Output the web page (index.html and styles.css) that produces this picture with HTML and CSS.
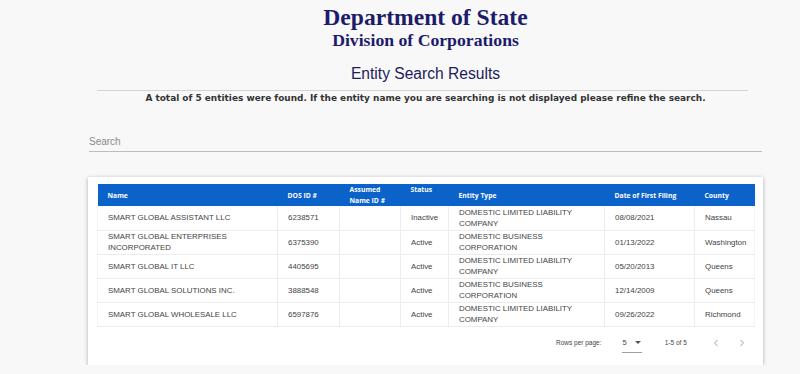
FILE: index.html
```html
<!DOCTYPE html>
<html lang="en">
<head>
<meta charset="utf-8">
<title>Entity Search Results</title>
<link rel="stylesheet" href="styles.css">
</head>
<body>
<div class="page">
  <header class="masthead">
    <div class="dept">Department of State</div>
    <div class="division">Division of Corporations</div>
  </header>

  <h1 class="title">Entity Search Results</h1>
  <hr class="rule">
  <p class="summary">A total of 5 entities were found. If the entity name you are searching is not displayed please refine the search.</p>

  <div class="search">
    <span class="search-label">Search</span>
  </div>

  <section class="card">
    <table class="results">
      <colgroup>
        <col class="c-name"><col class="c-dos"><col class="c-assumed"><col class="c-status">
        <col class="c-type"><col class="c-date"><col class="c-county">
      </colgroup>
      <thead>
        <tr>
          <th>Name</th>
          <th>DOS ID #</th>
          <th class="top">Assumed<br>Name ID #</th>
          <th class="top">Status</th>
          <th>Entity Type</th>
          <th>Date of First Filing</th>
          <th>County</th>
        </tr>
      </thead>
      <tbody>
        <tr>
          <td>SMART GLOBAL ASSISTANT LLC</td>
          <td>6238571</td>
          <td></td>
          <td>Inactive</td>
          <td>DOMESTIC LIMITED LIABILITY<br>COMPANY</td>
          <td>08/08/2021</td>
          <td>Nassau</td>
        </tr>
        <tr>
          <td>SMART GLOBAL ENTERPRISES<br>INCORPORATED</td>
          <td>6375390</td>
          <td></td>
          <td>Active</td>
          <td>DOMESTIC BUSINESS<br>CORPORATION</td>
          <td>01/13/2022</td>
          <td>Washington</td>
        </tr>
        <tr>
          <td>SMART GLOBAL IT LLC</td>
          <td>4405695</td>
          <td></td>
          <td>Active</td>
          <td>DOMESTIC LIMITED LIABILITY<br>COMPANY</td>
          <td>05/20/2013</td>
          <td>Queens</td>
        </tr>
        <tr>
          <td>SMART GLOBAL SOLUTIONS INC.</td>
          <td>3888548</td>
          <td></td>
          <td>Active</td>
          <td>DOMESTIC BUSINESS<br>CORPORATION</td>
          <td>12/14/2009</td>
          <td>Queens</td>
        </tr>
        <tr>
          <td>SMART GLOBAL WHOLESALE LLC</td>
          <td>6597876</td>
          <td></td>
          <td>Active</td>
          <td>DOMESTIC LIMITED LIABILITY<br>COMPANY</td>
          <td>09/26/2022</td>
          <td>Richmond</td>
        </tr>
      </tbody>
    </table>

    <div class="pager">
      <span class="pager-label">Rows per page:</span>
      <span class="pager-select">
        <span>5</span>
        <svg width="6" height="3" viewBox="0 0 6 3"><path d="M0 0h6L3 3z" fill="#555"/></svg>
      </span>
      <span class="pager-range">1-5 of 5</span>
      <span class="pager-nav">
        <svg width="8" height="10" viewBox="0 0 8 10"><path d="M5.5 2L2.5 5l3 3" fill="none" stroke="#c4c4c4" stroke-width="1.1"/></svg>
        <svg width="8" height="10" viewBox="0 0 8 10"><path d="M2.5 2l3 3-3 3" fill="none" stroke="#c4c4c4" stroke-width="1.1"/></svg>
      </span>
    </div>
  </section>
</div>
</body>
</html>
```

FILE: styles.css
```css
html, body {
  margin: 0;
  padding: 0;
  background: #f8f8f8;
}

.page {
  padding: 4px 38px 0 89px;
  font-family: "Liberation Sans", Arial, sans-serif;
  color: #333;
}

.masthead {
  text-align: center;
  font-family: "Liberation Serif", "Times New Roman", serif;
  font-weight: bold;
  color: #1c1c6b;
}

.dept {
  font-size: 23.6px;
  line-height: 27px;
}

.division {
  font-size: 17.7px;
  line-height: 19px;
}

.title {
  margin: 14px 0 0;
  text-align: center;
  font-weight: normal;
  font-size: 15.6px;
  line-height: 20px;
  color: #1c1c5e;
}

.rule {
  margin: 6px 14px 0 8px;
  border: 0;
  border-top: 1px solid #d4d4d4;
}

.summary {
  margin: 0;
  text-align: center;
  font-family: "DejaVu Sans", Verdana, sans-serif;
  font-weight: bold;
  font-size: 8.95px;
  line-height: 14px;
  color: #333;
}

.search {
  margin-top: 30px;
  height: 16px;
  border-bottom: 1px solid #bdbdbd;
  font-size: 10px;
  line-height: 14px;
  color: #8a8a8a;
}

.card {
  margin: 25px -1px 0 -1px;
  background: #fff;
  padding: 7px 9px 0;
  box-shadow: 0 1px 4px rgba(0, 0, 0, 0.3);
  height: 188px;
  box-sizing: border-box;
}

.results {
  width: 657px;
  border-collapse: collapse;
  table-layout: fixed;
  font-size: 7.9px;
}

.c-name { width: 180px; }
.c-dos { width: 62px; }
.c-assumed { width: 61px; }
.c-status { width: 48px; }
.c-type { width: 156px; }
.c-date { width: 90px; }
.c-county { width: 60px; }

.results th {
  background: #0b62c9;
  color: #fff;
  height: 22px;
  padding: 0 10px;
  text-align: left;
  font-family: "Open Sans", "DejaVu Sans", sans-serif;
  font-weight: bold;
  font-size: 6.8px;
  line-height: 11px;
  vertical-align: middle;
  box-sizing: border-box;
}

.results th.top {
  vertical-align: top;
  padding-top: 0;
}

.results td {
  height: 24px;
  padding: 0 10px;
  line-height: 11px;
  color: #444;
  border: 1px solid #ececec;
  border-top: 0;
  vertical-align: middle;
  box-sizing: border-box;
  white-space: nowrap;
}

.results tbody tr td:first-child { border-left-color: #f4f4f4; }
.results tbody tr td:last-child { border-right-color: #f4f4f4; }

.pager {
  display: flex;
  align-items: center;
  height: 32px;
  margin-top: 0;
  font-family: "Liberation Sans", Arial, sans-serif;
  font-size: 6.5px;
  color: #444;
}

.pager-label {
  margin-left: 459px;
}

.pager-select {
  display: flex;
  align-items: center;
  gap: 8px;
  margin-left: 20px;
  padding: 5px 1px;
  border-bottom: 1px solid #9e9e9e;
  font-size: 7.5px;
}

.pager-range {
  margin-left: 23px;
}

.pager-nav {
  display: flex;
  gap: 18px;
  margin-left: 25px;
}
```
